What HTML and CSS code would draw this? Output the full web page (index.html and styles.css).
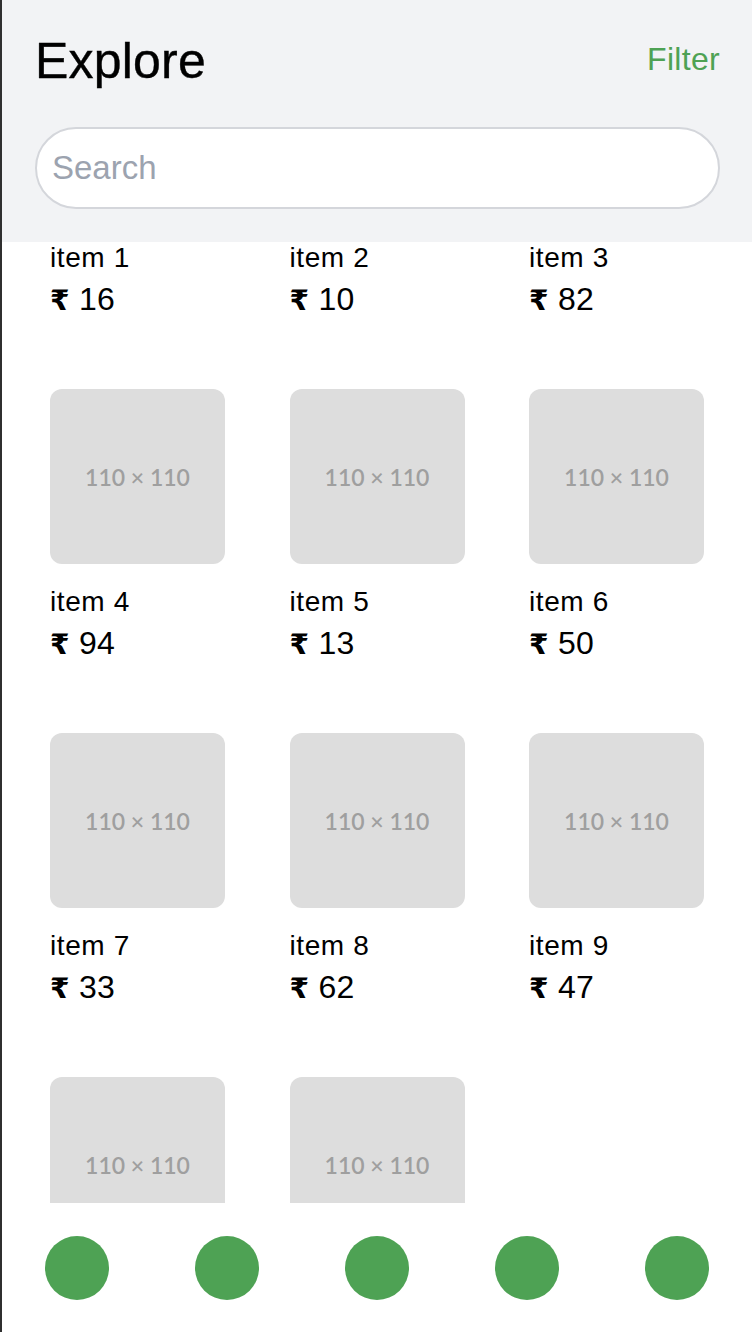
FILE: index.html
```html
<!DOCTYPE html>
<html lang="en">
<head>
<meta charset="utf-8">
<title>Explore</title>
<link rel="stylesheet" href="styles.css">
</head>
<body>
<div class="app">
  <header class="header">
    <div class="header-row">
      <h1 class="title">Explore</h1>
      <a class="filter" href="#">Filter</a>
    </div>
    <input class="search" type="text" placeholder="Search">
  </header>
  <main class="scroll">
    <div class="grid">
      <div class="card"><div class="thumb">110 × 110</div><div class="name">item 1</div><div class="price"><span class="cur">₹</span> 16</div></div>
      <div class="card"><div class="thumb">110 × 110</div><div class="name">item 2</div><div class="price"><span class="cur">₹</span> 10</div></div>
      <div class="card"><div class="thumb">110 × 110</div><div class="name">item 3</div><div class="price"><span class="cur">₹</span> 82</div></div>
      <div class="card"><div class="thumb">110 × 110</div><div class="name">item 4</div><div class="price"><span class="cur">₹</span> 94</div></div>
      <div class="card"><div class="thumb">110 × 110</div><div class="name">item 5</div><div class="price"><span class="cur">₹</span> 13</div></div>
      <div class="card"><div class="thumb">110 × 110</div><div class="name">item 6</div><div class="price"><span class="cur">₹</span> 50</div></div>
      <div class="card"><div class="thumb">110 × 110</div><div class="name">item 7</div><div class="price"><span class="cur">₹</span> 33</div></div>
      <div class="card"><div class="thumb">110 × 110</div><div class="name">item 8</div><div class="price"><span class="cur">₹</span> 62</div></div>
      <div class="card"><div class="thumb">110 × 110</div><div class="name">item 9</div><div class="price"><span class="cur">₹</span> 47</div></div>
      <div class="card"><div class="thumb">110 × 110</div><div class="name">item 10</div><div class="price"><span class="cur">₹</span> 25</div></div>
      <div class="card"><div class="thumb">110 × 110</div><div class="name">item 11</div><div class="price"><span class="cur">₹</span> 71</div></div>
    </div>
  </main>
  <nav class="tabbar">
    <span class="tab"><span class="dot"></span></span>
    <span class="tab"><span class="dot"></span></span>
    <span class="tab"><span class="dot"></span></span>
    <span class="tab"><span class="dot"></span></span>
    <span class="tab"><span class="dot"></span></span>
  </nav>
</div>
</body>
</html>
```
FILE: styles.css
```css
* { box-sizing: border-box; }
html, body { margin: 0; padding: 0; }
body {
  font-family: "Liberation Sans", Arial, "DejaVu Sans", sans-serif;
  color: #000;
  background: #fff;
}
.app {
  width: 752px;
  height: 1332px;
  border-left: 2px solid #2f2f2f;
  display: flex;
  flex-direction: column;
  overflow: hidden;
}
.header {
  background: #f2f3f5;
  padding: 31px 32px 33px 33px;
  flex: none;
}
.header-row {
  display: flex;
  justify-content: space-between;
  align-items: center;
  height: 56px;
}
.title {
  margin: 0;
  font-size: 50px;
  line-height: 56px;
  font-weight: normal;
  letter-spacing: 0.2px;
  position: relative;
  top: 2px;
  -webkit-text-stroke: 0.4px #000;
}
.filter {
  font-size: 32px;
  line-height: 56px;
  color: #4ea254;
  text-decoration: none;
  letter-spacing: 0.3px;
}
.search {
  display: block;
  margin-top: 40px;
  width: 100%;
  height: 82px;
  border: 2px solid #d4d6db;
  border-radius: 41px;
  background: #fff;
  padding: 0 15px;
  font-family: inherit;
  font-size: 33px;
  color: #333;
  outline: none;
}
.search::placeholder { color: #9ca3af; }
.scroll {
  flex: 1;
  overflow: hidden;
}
.grid {
  margin-top: -197px;
  padding-left: 48px;
  display: grid;
  grid-template-columns: repeat(3, 175px);
  column-gap: 64.5px;
  row-gap: 72px;
}
.thumb {
  width: 175px;
  height: 175px;
  border-radius: 12px;
  background: #dddddd;
  display: flex;
  align-items: center;
  justify-content: center;
  font-family: Lato, "Open Sans", sans-serif;
  font-size: 23px;
  font-weight: 600;
  color: #9f9f9f;
}
.name {
  margin-top: 22px;
  font-size: 28px;
  line-height: 32px;
  height: 32px;
  letter-spacing: 0.6px;
}
.price {
  margin-top: 7px;
  font-size: 32px;
  line-height: 36px;
  height: 36px;
  letter-spacing: 0.3px;
}
.cur {
  font-weight: bold;
  font-size: 28px;
  line-height: 1;
}
.tabbar {
  flex: none;
  height: 129px;
  background: #fff;
  display: grid;
  grid-template-columns: repeat(5, 1fr);
  align-items: center;
}
.tab {
  display: flex;
  justify-content: center;
}
.dot {
  width: 64px;
  height: 64px;
  border-radius: 50%;
  background: #4ea254;
}
```
